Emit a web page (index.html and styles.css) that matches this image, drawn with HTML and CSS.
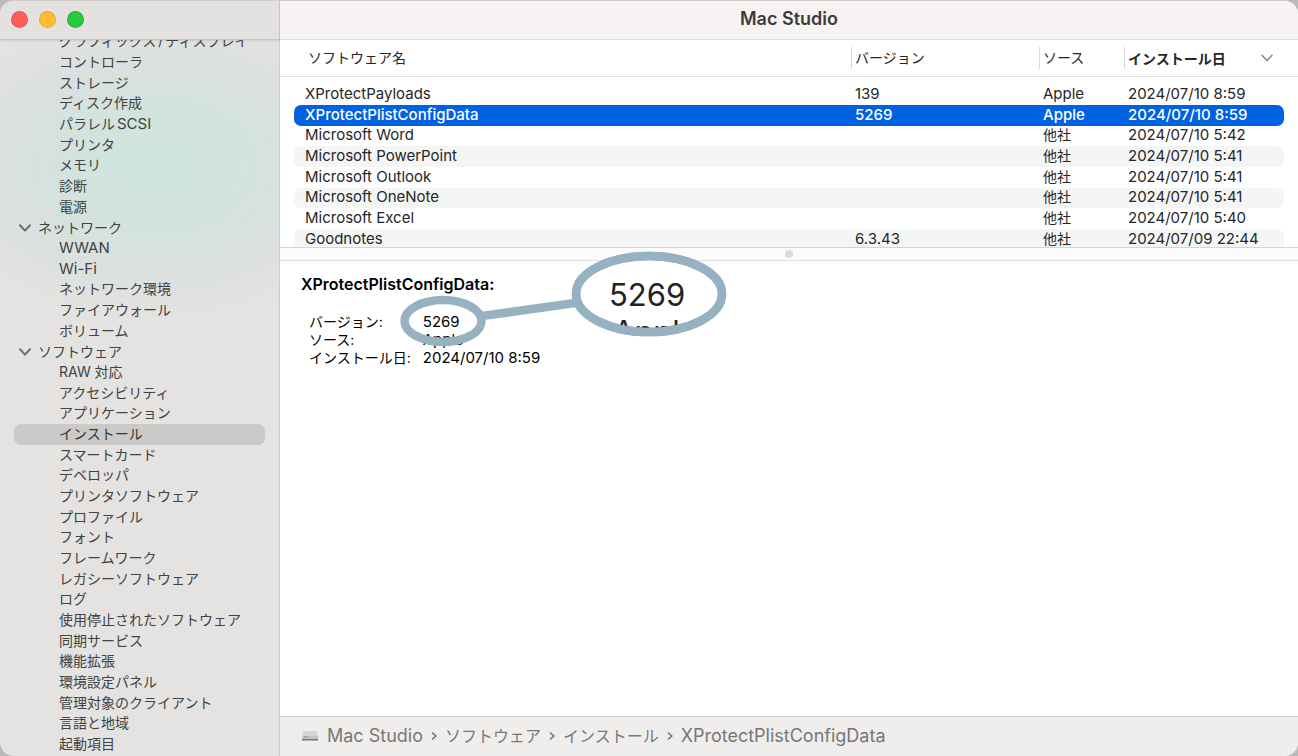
FILE: index.html
```html
<!DOCTYPE html>
<html lang="ja">
<head>
<meta charset="utf-8">
<title>Mac Studio</title>
<link rel="stylesheet" href="styles.css">
</head>
<body>
<div class="window">
  <aside class="sidebar">
    <div class="controls">
      <button class="light close" aria-label="閉じる"></button>
      <button class="light minimize" aria-label="しまう"></button>
      <button class="light zoom" aria-label="拡大"></button>
    </div>
    <nav class="tree-scroll">
      <ul class="tree">
        <li><a href="#">グラフィックス<span class="slash">/</span>ディスプレイ</a></li>
        <li><a href="#">コントローラ</a></li>
        <li><a href="#">ストレージ</a></li>
        <li><a href="#">ディスク作成</a></li>
        <li><a href="#">パラレル<span class="latin after">SCSI</span></a></li>
        <li><a href="#">プリンタ</a></li>
        <li><a href="#">メモリ</a></li>
        <li><a href="#">診断</a></li>
        <li><a href="#">電源</a></li>
        <li><button class="group"><svg class="chevron" viewBox="0 0 12 8"><path d="M1 1.200 6 6.600 11 1.200"/></svg>ネットワーク</button></li>
        <li><a href="#"><span class="latin">WWAN</span></a></li>
        <li><a href="#"><span class="latin">Wi-Fi</span></a></li>
        <li><a href="#">ネットワーク環境</a></li>
        <li><a href="#">ファイアウォール</a></li>
        <li><a href="#">ボリューム</a></li>
        <li><button class="group"><svg class="chevron" viewBox="0 0 12 8"><path d="M1 1.200 6 6.600 11 1.200"/></svg>ソフトウェア</button></li>
        <li><a href="#">RAW 対応</a></li>
        <li><a href="#">アクセシビリティ</a></li>
        <li><a href="#">アプリケーション</a></li>
        <li><a href="#" class="current" aria-current="page">インストール</a></li>
        <li><a href="#">スマートカード</a></li>
        <li><a href="#">デベロッパ</a></li>
        <li><a href="#">プリンタソフトウェア</a></li>
        <li><a href="#">プロファイル</a></li>
        <li><a href="#">フォント</a></li>
        <li><a href="#">フレームワーク</a></li>
        <li><a href="#">レガシーソフトウェア</a></li>
        <li><a href="#">ログ</a></li>
        <li><a href="#">使用停止されたソフトウェア</a></li>
        <li><a href="#">同期サービス</a></li>
        <li><a href="#">機能拡張</a></li>
        <li><a href="#">環境設定パネル</a></li>
        <li><a href="#">管理対象のクライアント</a></li>
        <li><a href="#">言語と地域</a></li>
        <li><a href="#">起動項目</a></li>
      </ul>
    </nav>
  </aside>
  <main class="content">
    <header class="titlebar"><h1>Mac Studio</h1></header>
    <section class="list-pane">
      <table class="list">
        <colgroup><col><col class="col-version"><col class="col-source"><col class="col-date"></colgroup>
        <thead>
          <tr>
            <th scope="col"><div class="head first">ソフトウェア名</div></th>
            <th scope="col"><div class="head">バージョン</div></th>
            <th scope="col"><div class="head">ソース</div></th>
            <th scope="col" aria-sort="descending"><div class="head sorted">インストール日<svg class="sort" viewBox="0 0 12 8"><path d="M1 1.200 6 6.600 11 1.200"/></svg></div></th>
          </tr>
        </thead>
        <tbody>
          <tr><td>XProtectPayloads</td><td>139</td><td>Apple</td><td>2024/07/10 8:59</td></tr>
          <tr class="selected"><td>XProtectPlistConfigData</td><td>5269</td><td>Apple</td><td>2024/07/10 8:59</td></tr>
          <tr><td>Microsoft Word</td><td></td><td class="ja">他社</td><td>2024/07/10 5:42</td></tr>
          <tr><td>Microsoft PowerPoint</td><td></td><td class="ja">他社</td><td>2024/07/10 5:41</td></tr>
          <tr><td>Microsoft Outlook</td><td></td><td class="ja">他社</td><td>2024/07/10 5:41</td></tr>
          <tr><td>Microsoft OneNote</td><td></td><td class="ja">他社</td><td>2024/07/10 5:41</td></tr>
          <tr><td>Microsoft Excel</td><td></td><td class="ja">他社</td><td>2024/07/10 5:40</td></tr>
          <tr><td>Goodnotes</td><td>6.3.43</td><td class="ja">他社</td><td>2024/07/09 22:44</td></tr>
        </tbody>
      </table>
    </section>
    <div class="splitter"><span class="grip"></span></div>
    <section class="detail">
      <h2>XProtectPlistConfigData:</h2>
      <dl class="facts">
        <dt>バージョン:</dt><dd>5269</dd>
        <dt>ソース:</dt><dd>Apple</dd>
        <dt>インストール日:</dt><dd>2024/07/10 8:59</dd>
      </dl>
      <svg class="callout" viewBox="0 0 340 100" width="340" height="100">
        <defs><clipPath id="lens"><ellipse cx="257" cy="45" rx="73" ry="38"/></clipPath></defs>
        <path class="ring" d="M90 67 183 54"/>
        <ellipse class="ring" cx="51" cy="72" rx="38.500" ry="21"/>
        <ellipse class="ring glass" cx="257" cy="45" rx="73" ry="38"/>
        <g clip-path="url(#lens)" class="magnified">
          <text x="217" y="57">5269</text>
          <text x="221" y="94">Apple</text>
        </g>
        <ellipse class="ring" cx="257" cy="45" rx="73" ry="38"/>
      </svg>
    </section>
    <footer class="pathbar">
      <svg class="drive" viewBox="0 0 18 12"><path fill="#d4d4d6" d="M2 1h14l1 7H1z"/><path fill="#c3c4c6" d="M1 6h16v3H1z"/><path fill="#77787a" d="M1 9h16v1.500H1z"/><path fill="#8d8e90" d="M3 6.500h4v1H3z"/></svg>
      <span class="name">Mac Studio</span>
      <svg class="step" viewBox="0 0 6 10"><path d="M1 1.500 4.800 5 1 8.500"/></svg>
      <span>ソフトウェア</span>
      <svg class="step" viewBox="0 0 6 10"><path d="M1 1.500 4.800 5 1 8.500"/></svg>
      <span>インストール</span>
      <svg class="step" viewBox="0 0 6 10"><path d="M1 1.500 4.800 5 1 8.500"/></svg>
      <span class="name">XProtectPlistConfigData</span>
    </footer>
  </main>
</div>
</body>
</html>
```
FILE: styles.css
```css
* { box-sizing: border-box; }
body {
  margin: 0;
  background: #b9babb;
  color: #262626;
  font: 15px/20px Inter, "Noto Sans CJK JP", sans-serif;
}
h1, h2, dl, dd, ul { margin: 0; padding: 0; }
button { border: 0; padding: 0; background: none; color: inherit; font: inherit; }
a { color: inherit; text-decoration: none; }

.window {
  display: flex;
  height: 100vh;
  border-radius: 14px;
  overflow: hidden;
  border-top: 1px solid #cfcecd;
}
.sidebar {
  flex: none;
  width: 280px;
  display: flex;
  flex-direction: column;
  border-right: 1px solid #cccbca;
  background:
    radial-gradient(ellipse 230px 155px at 155px 165px, #cee5dd 0%, #d2e3de 35%, #dbe0df 70%, transparent 100%),
    #e4e3e1;
}
.controls {
  flex: none;
  display: flex;
  align-items: center;
  gap: 11px;
  height: 39px;
  padding: 0 0 2px 11px;
  background: #e4e2e1;
  border-bottom: 1px solid #c6c5c4;
  box-shadow: 0 1px 2px #0000001a;
}
.light { width: 17px; height: 17px; border-radius: 50%; border: 1px solid #00000018; }
.close { background: #ff5e57; }
.minimize { background: #febc2e; }
.zoom { background: #28c840; }

.tree-scroll { flex: 1; min-height: 0; overflow: hidden; }
.tree { list-style: none; margin-top: -9px; font-size: 14px; color: #424242; }
.tree li { height: 21px; line-height: 20px; }
.tree li:nth-child(3n) { height: 20px; }
.tree a {
  display: block;
  height: 100%;
  margin: 0 14px;
  padding-left: 45px;
  border-radius: 7px;
  white-space: nowrap;
}
.tree .current { background: #cbcac8; color: #333; }
.latin { font-size: 15px; }
.latin.after { margin-left: 2px; }
.slash { margin: 0 2px; }
.group { display: flex; align-items: center; gap: 7px; height: 100%; padding-left: 19px; }
.chevron { width: 12px; height: 8px; }
.chevron path, .sort path { fill: none; stroke: #6d6d6d; stroke-width: 2; stroke-linecap: round; stroke-linejoin: round; }

.content { flex: 1; min-width: 0; display: flex; flex-direction: column; background: #fff; }
.titlebar {
  flex: none;
  height: 39px;
  display: flex;
  align-items: center;
  justify-content: center;
  padding-bottom: 3px;
  background: #f6f3f2;
  border-bottom: 1px solid #e2dfde;
}
.titlebar h1 { font-size: 18px; font-weight: 600; color: #3c3c3c; }

.list-pane {
  flex: none;
  height: 208px;
  padding: 0 14px;
  overflow: hidden;
  border-bottom: 1px solid #d4d4d4;
  background: linear-gradient(#dfdfdf, #dfdfdf) 0 36px / 100% 1px no-repeat;
}
.list { width: 100%; table-layout: fixed; border-collapse: separate; border-spacing: 0; }
.col-version { width: 188px; }
.col-source { width: 85px; }
.col-date { width: 160px; }
.list th { height: 37px; padding: 0 0 1px; font-size: 14px; font-weight: 400; text-align: left; }
.head { height: 22px; line-height: 21px; padding-left: 3px; border-left: 1px solid #d9d9d9; }
.head.first { padding-left: 14px; border: 0; }
.head.sorted { display: flex; align-items: center; justify-content: space-between; padding-right: 11px; font-weight: 700; }
.sort { width: 12px; height: 8px; }
.sort path { stroke: #8a8a8a; stroke-width: 1.500; }
.list tbody::before { content: ""; display: table-row; height: 7px; }
.list td { height: 21px; padding: 0 0 2px 4px; line-height: 18px; white-space: nowrap; }
.list tr:nth-child(3n) td { height: 20px; }
.list td:first-child { padding-left: 11px; border-radius: 7px 0 0 7px; }
.list td:last-child { border-radius: 0 7px 7px 0; }
.list .ja { font-size: 14px; }
.list tbody tr:nth-child(even) td { background: #f4f5f5; }
.list tbody tr.selected:nth-child(n) td { background: #0062e1; color: #fff; font-weight: 500; }

.splitter {
  flex: none;
  display: flex;
  align-items: center;
  justify-content: center;
  height: 13px;
  background: #fbfbfb;
  border-bottom: 1px solid #dedede;
}
.grip { width: 8px; height: 8px; border-radius: 50%; background: #dcdcdc; }

.detail { position: relative; flex: 1; padding: 13px 21px; color: #000; }
.detail h2 { font-size: 16px; line-height: 20px; font-weight: 600; }
.facts {
  display: grid;
  grid-template-columns: max-content 1fr;
  column-gap: 12px;
  margin: 19px 0 0 8px;
  line-height: 18px;
}
.facts dt { font-size: 14px; }
.callout { position: absolute; left: 112px; top: -12px; }
.ring { fill: none; stroke: #96b2c1; stroke-width: 8.500; }
.glass { fill: #fff; }
.magnified { fill: #222; font-size: 31px; }

.pathbar {
  flex: none;
  display: flex;
  align-items: center;
  gap: 8px;
  height: 40px;
  padding: 0 0 2px 21px;
  border-top: 1px solid #d3d2d1;
  background: #efeeed;
  color: #787776;
  font-size: 16px;
}
.name { font-size: 18px; }
.drive { width: 18px; height: 12px; }
.step { width: 6px; height: 10px; }
.step path { fill: none; stroke: #6f6f6e; stroke-width: 1.500; }
```
